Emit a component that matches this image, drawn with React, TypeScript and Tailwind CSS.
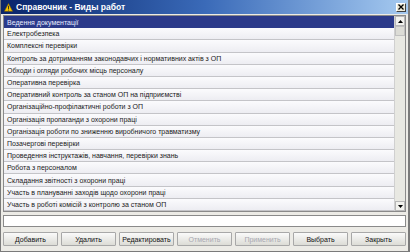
import React from 'react';

const items = [
  'Ведення документації',
  'Електробезпека',
  'Комплексні перевірки',
  'Контроль за дотриманням законодавчих і нормативних актів з ОП',
  'Обходи і огляди робочих місць персоналу',
  'Оперативна перевірка',
  'Оперативний контроль за станом ОП на підприємстві',
  'Організаційно-профілактичні роботи з ОП',
  'Організація пропаганди з охорони праці',
  'Організація роботи по зниженню виробничого травматизму',
  'Позачергові перевірки',
  'Проведення інструктажів, навчання, перевірки знань',
  'Робота з персоналом',
  'Складання звітності з охорони праці',
  'Участь в плануванні заходів щодо охорони праці',
  'Участь в роботі комісій з контролю за станом ОП',
];

const buttons = [
  { label: 'Добавить', disabled: false },
  { label: 'Удалить', disabled: false },
  { label: 'Редактировать', disabled: false },
  { label: 'Отменить', disabled: true },
  { label: 'Применить', disabled: true },
  { label: 'Выбрать', disabled: false },
  { label: 'Закрыть', disabled: false },
];

export default function App() {
  return (
    <div className="w-[410px] h-[252px] bg-[#ecebe6] border-l border-r-2 border-b border-[#7a7a7a] flex flex-col font-['Liberation_Sans',sans-serif] overflow-hidden">
      {/* title bar */}
      <div className="h-[14px] shrink-0 flex items-center justify-between pl-[3px] pr-[2px] bg-gradient-to-r from-[#0a246a] via-[#3a6ab8] to-[#a6caf0]">
        <div className="flex items-center gap-[3px]">
          <svg width="9" height="9" viewBox="0 0 10 10">
            <path d="M5 0.5 L9.6 9.3 L0.4 9.3 Z" fill="#f5c400" stroke="#7a5a00" strokeWidth="0.6" />
            <rect x="4.5" y="3" width="1" height="3.6" fill="#222" />
            <rect x="4.5" y="7.3" width="1" height="1" fill="#222" />
          </svg>
          <span className="text-[8.5px] font-bold text-white leading-none">Справочник - Виды работ</span>
        </div>
        <div className="w-[10px] h-[9px] bg-[#ece9d8] border border-t-white border-l-white border-r-[#404040] border-b-[#404040] flex items-center justify-center">
          <svg width="6" height="6" viewBox="0 0 6 6">
            <path d="M0.5 0.5 L5.5 5.5 M5.5 0.5 L0.5 5.5" stroke="#000" strokeWidth="1.3" />
          </svg>
        </div>
      </div>

      {/* list */}
      <div className="mt-[1px] mx-[2px] h-[197px] shrink-0 flex border border-[#8a8a8a] bg-white">
        <div className="flex-1 flex flex-col">
          {items.map((t, i) => (
            <div
              key={i}
              className={
                i === 0
                  ? 'h-[12.2px] shrink-0 flex items-center pl-[3px] bg-[#2b3a8a] text-[#e8ecff] text-[7px] leading-none'
                  : 'h-[12.2px] shrink-0 flex items-center pl-[3px] bg-gradient-to-b from-[#fbfbfd] to-[#ededf2] border-b border-[#c4c4c8] text-[#1a1a1a] text-[7px] leading-none whitespace-nowrap'
              }
            >
              {t}
            </div>
          ))}
        </div>
        {/* scrollbar */}
        <div className="w-[11px] shrink-0 bg-[#e8e8e2] flex flex-col border-l border-[#d0d0d0]">
          <div className="h-[10px] bg-[#f2f2ee] border border-[#b8b8b8] flex items-center justify-center">
            <svg width="5" height="3" viewBox="0 0 5 3"><path d="M0 3 L2.5 0 L5 3 Z" fill="#000" /></svg>
          </div>
          <div className="h-[10px] bg-[#dcdcd6] border border-[#c0c0c0]" />
          <div className="flex-1" />
          <div className="h-[10px] bg-[#f2f2ee] border border-[#b8b8b8] flex items-center justify-center">
            <svg width="5" height="3" viewBox="0 0 5 3"><path d="M0 0 L2.5 3 L5 0 Z" fill="#000" /></svg>
          </div>
        </div>
      </div>

      {/* input */}
      <div className="mt-[3px] mx-[2px] h-[12px] shrink-0 bg-white border border-[#8a8a8a]" />

      {/* buttons */}
      <div className="mt-[5px] mx-[2px] flex gap-[3px]">
        {buttons.map((b) => (
          <div
            key={b.label}
            className={
              'flex-1 h-[14px] flex items-center justify-center text-[7px] leading-none bg-gradient-to-b from-[#fafafa] to-[#dcdcd6] border border-[#a8a8a8] rounded-[1px] ' +
              (b.disabled ? 'text-[#a8a8b0]' : 'text-[#111]')
            }
          >
            {b.label}
          </div>
        ))}
      </div>
    </div>
  );
}
